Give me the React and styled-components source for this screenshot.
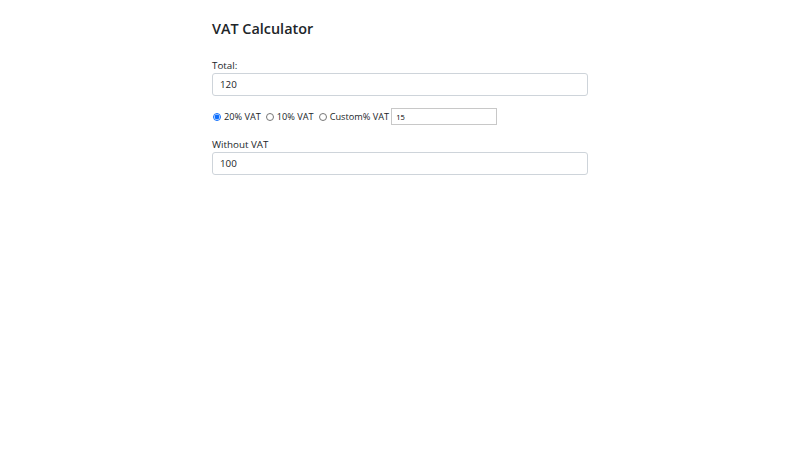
import React, { useState } from 'react'
import styled, { createGlobalStyle } from 'styled-components'

const GlobalStyle = createGlobalStyle`
  body {
    margin: 0;
    background: #fff;
    font-family: "Open Sans", "Noto Sans", "Liberation Sans", sans-serif;
    color: #212529;
  }
`

const Container = styled.div`
  width: 376px;
  margin: 0 auto;
  padding-top: 18px;
  display: flex;
  flex-direction: column;
`

const Title = styled.h1`
  font-size: 14.4px;
  font-weight: 600;
  margin: 0 0 19px;
  line-height: 22px;
`

const Group = styled.div`
  display: flex;
  flex-direction: column;
  margin-bottom: ${p => p.gap || 12}px;
`

const Label = styled.label`
  font-size: 9.8px;
  line-height: 13px;
  margin-bottom: 1px;
`

const Input = styled.input`
  box-sizing: border-box;
  width: 100%;
  height: 23px;
  padding: 0 7px;
  font-family: inherit;
  font-size: 9.8px;
  color: #212529;
  border: 1px solid #ced4da;
  border-radius: 3px;
  outline: none;
`

const RadioRow = styled.div`
  display: flex;
  align-items: center;
  font-size: 9.2px;
  margin-bottom: 13px;
`

const Option = styled.label`
  display: flex;
  align-items: center;
  margin-right: 4px;
`

const Radio = styled.input`
  width: 8px;
  height: 8px;
  margin: 0 3px 0 1px;
  accent-color: #0d6efd;
`

const SmallInput = styled.input`
  box-sizing: border-box;
  width: 106px;
  height: 17px;
  margin-left: -2px;
  padding: 0 4px;
  font-family: inherit;
  font-size: 7.5px;
  border: 1px solid #c8c8c8;
  border-radius: 0;
  outline: none;
`

const options = [
  { id: '20', label: '20% VAT' },
  { id: '10', label: '10% VAT' },
  { id: 'custom', label: 'Custom% VAT' },
]

export default function App() {
  const [total, setTotal] = useState('120')
  const [rate, setRate] = useState('20')
  const [custom, setCustom] = useState('15')

  const pct = rate === 'custom' ? parseFloat(custom) || 0 : parseFloat(rate)
  const net = (parseFloat(total) || 0) / (1 + pct / 100)
  const result = Math.round(net * 100) / 100

  return (
    <>
      <GlobalStyle />
      <Container>
        <Title>VAT Calculator</Title>
        <Group gap={12}>
          <Label>Total:</Label>
          <Input value={total} onChange={e => setTotal(e.target.value)} />
        </Group>
        <RadioRow>
          {options.map(o => (
            <Option key={o.id}>
              <Radio
                type="radio"
                name="vat"
                checked={rate === o.id}
                onChange={() => setRate(o.id)}
              />
              {o.label}
            </Option>
          ))}
          <SmallInput value={custom} onChange={e => setCustom(e.target.value)} />
        </RadioRow>
        <Group>
          <Label>Without VAT</Label>
          <Input value={String(result)} readOnly />
        </Group>
      </Container>
    </>
  )
}
